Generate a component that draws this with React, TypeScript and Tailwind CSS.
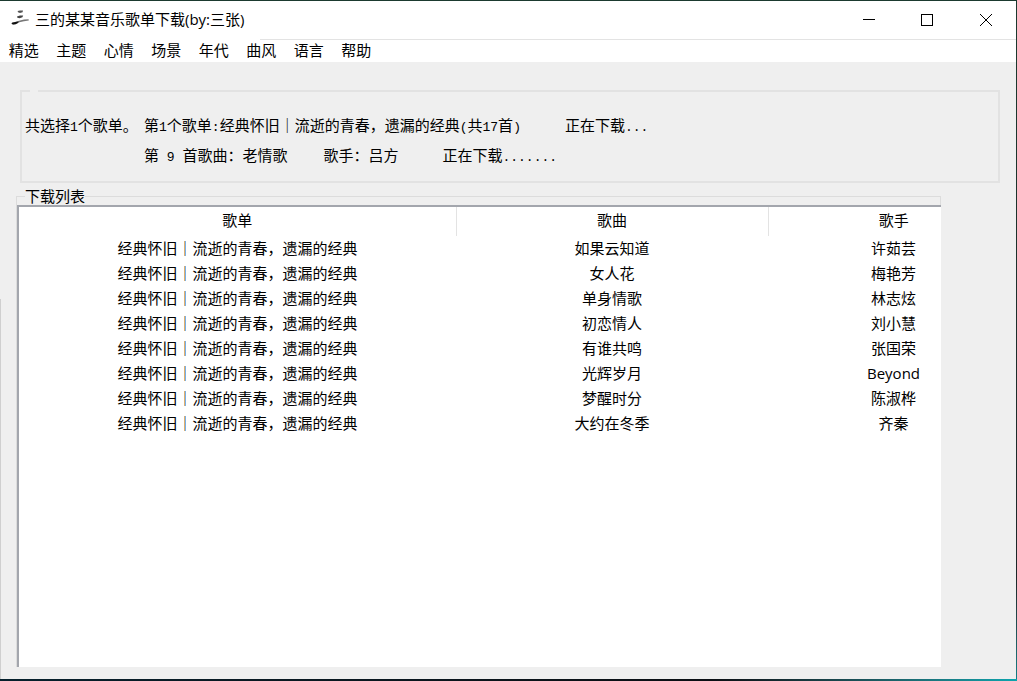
import type { ReactNode } from "react";

const menus = ["精选", "主题", "心情", "场景", "年代", "曲风", "语言", "帮助"];

const playlist = "经典怀旧｜流逝的青春，遗漏的经典";

const songs = [
  { title: "如果云知道", singer: "许茹芸" },
  { title: "女人花", singer: "梅艳芳" },
  { title: "单身情歌", singer: "林志炫" },
  { title: "初恋情人", singer: "刘小慧" },
  { title: "有谁共鸣", singer: "张国荣" },
  { title: "光辉岁月", singer: "Beyond" },
  { title: "梦醒时分", singer: "陈淑桦" },
  { title: "大约在冬季", singer: "齐秦" },
];

// half-width characters in the status text
function Half({ children }: { children: ReactNode }) {
  return (
    <span className="whitespace-pre font-['Liberation_Mono',monospace] text-[13px] leading-none">
      {children}
    </span>
  );
}

function Logo() {
  return (
    <svg width="20" height="20" viewBox="0 0 20 20" aria-hidden="true">
      <path d="M7.6 2 L10 1.4 L13 1.6 L12.6 3.2 L10 4 L8 3.2 Z" fill="#555" />
      <path d="M7 7.6 L10 6.6 L13.2 6.6 L12.4 8.2 L9.6 9.2 L7.4 8.8 Z" fill="#444" />
      <path
        d="M2 13.8 L5 13 L9 11.8 L14 10.4 L18.6 10.2 L18.8 11.4 L14 12.2 L9.4 13.2 L6.4 15 L3 15.6 L1.6 14.8 Z"
        fill="#777"
      />
      <path d="M2 13.8 L5.4 13 L8.6 12.4 L8 13.8 L5.6 15.2 L3 15.6 L1.6 14.8 Z" fill="#111" />
    </svg>
  );
}

function TitleBar() {
  return (
    <header className="bg-white">
      <div className="flex h-[38px] items-center justify-between pl-[10px]">
        <div className="flex items-center gap-[5px] pb-[2px]">
          <Logo />
          <h1 className="text-[15px] leading-5">三的某某音乐歌单下载(by:三张)</h1>
        </div>
        <div className="flex h-full">
          <button type="button" aria-label="最小化" className="flex w-[58px] items-center justify-center">
            <svg width="12" height="12" viewBox="0 0 12 12" fill="none" stroke="#000" shapeRendering="crispEdges">
              <path d="M0 5.5H12" />
            </svg>
          </button>
          <button type="button" aria-label="最大化" className="flex w-[58px] items-center justify-center">
            <svg width="12" height="12" viewBox="0 0 12 12" fill="none" stroke="#000" shapeRendering="crispEdges">
              <path d="M0.5 0.5H11.5V11.5H0.5Z" />
            </svg>
          </button>
          <button type="button" aria-label="关闭" className="flex w-[60px] items-center justify-center">
            <svg width="12" height="12" viewBox="0 0 12 12" fill="none" stroke="#000">
              <path d="M0 0L12 12M12 0L0 12" />
            </svg>
          </button>
        </div>
      </div>
      <div className="ml-[260px] h-px bg-[#e3e3e3]" />
      <nav className="grid h-[22px] w-[380px] grid-cols-8">
        {menus.map((menu) => (
          <button key={menu} type="button" className="pb-[2px] text-[15px] leading-5">
            {menu}
          </button>
        ))}
      </nav>
    </header>
  );
}

function StatusPanel() {
  return (
    <fieldset
      aria-label="下载状态"
      className="mt-7 mr-4 ml-5 min-w-0 border-2 border-[#e2e2e2] pt-[19px] pb-[10px] pl-[3px] font-['Liberation_Sans','Noto_Sans_CJK_SC',sans-serif]"
    >
      <legend className="ml-[5px] h-px w-2" />
      <div className="grid grid-cols-[119px_1fr] text-[15px] leading-[30px]">
        <p>
          共选择<Half>1</Half>个歌单。
        </p>
        <p className="flex gap-[44px]">
          <span>
            第<Half>1</Half>个歌单<Half>:</Half>
            {playlist}
            <Half>(</Half>共<Half>17</Half>首<Half>)</Half>
          </span>
          <span>
            正在下载<Half>...</Half>
          </span>
        </p>
        <p className="col-start-2 flex">
          <span className="mr-9">
            第<Half> 9 </Half>首歌曲：老情歌
          </span>
          <span className="mr-[44px]">歌手：吕方</span>
          <span>
            正在下载<Half>.......</Half>
          </span>
        </p>
      </div>
    </fieldset>
  );
}

function DownloadList() {
  return (
    <fieldset className="mt-1 mr-[75px] mb-3 ml-4 flex min-w-0 flex-1 flex-col border border-b-0 border-[#dcdcdc]">
      <legend className="ml-2 font-['Noto_Sans_CJK_SC',sans-serif] text-[15px] leading-[18px]">
        下载列表
      </legend>
      <div className="-mr-px flex-1 overflow-hidden border-t-2 border-l-2 border-[#a3a6ad] bg-white">
        <table className="w-[1000px] table-fixed border-collapse text-center text-[15px]">
          <thead>
            <tr className="h-[29px]">
              <th className="w-[437px] border-r border-[#e3e3e3] pb-[2px] font-normal">歌单</th>
              <th className="w-[312px] border-r border-[#e3e3e3] pb-[2px] font-normal">歌曲</th>
              <th className="w-[251px] pb-[2px] font-normal">歌手</th>
            </tr>
          </thead>
          <tbody>
            {songs.map((song) => (
              <tr key={song.title} className="h-[25px] leading-[25px]">
                <td>{playlist}</td>
                <td>{song.title}</td>
                <td>{song.singer}</td>
              </tr>
            ))}
          </tbody>
        </table>
      </div>
    </fieldset>
  );
}

export default function App() {
  return (
    <div className="flex min-h-screen flex-col bg-gradient-to-r from-[#06202c] via-[#0b0f14] via-70% to-[#0aa5ae] font-['Open_Sans','Noto_Sans_CJK_SC',sans-serif] text-black">
      <div className="h-px bg-[#1b3a2f]" />
      <div className="flex flex-1">
        <main className="relative flex min-w-0 flex-1 flex-col bg-[#efefef]">
          <TitleBar />
          <StatusPanel />
          <DownloadList />
          {/* window edge */}
          <div className="absolute bottom-0 left-0 h-[56%] w-px bg-[#cfcfcf]" />
        </main>
        <div className="w-px bg-gradient-to-b from-[#1b3a2f] via-[#1c2628] via-85% to-[#0f7f86]" />
      </div>
      <div className="h-[2px]" />
    </div>
  );
}
